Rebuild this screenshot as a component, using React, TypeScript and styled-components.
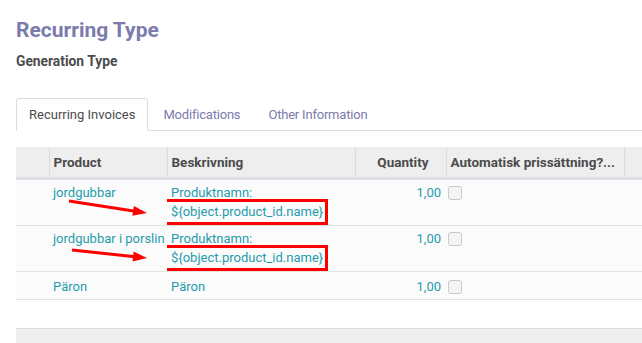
import React from "react";
import styled, { createGlobalStyle } from "styled-components";

type LineType = {
  product: string;
  label: string;
  template?: string;
  quantity: string;
};

const lines: LineType[] = [
  { product: "jordgubbar", label: "Produktnamn:", template: "${object.product_id.name}", quantity: "1,00" },
  { product: "jordgubbar i porslin", label: "Produktnamn:", template: "${object.product_id.name}", quantity: "1,00" },
  { product: "Päron", label: "Päron", quantity: "1,00" },
];

const tabs = ["Recurring Invoices", "Modifications", "Other Information"];

const GlobalStyle = createGlobalStyle`
  body {
    margin: 0;
    background: #ffffff;
    font-family: Roboto, "Noto Sans", sans-serif;
    font-size: 13px;
    color: #4c4c4c;
    overflow: hidden;
  }
`;

export default function App() {
  return (
    <>
      <GlobalStyle />
      <Sheet>
        <Title>Recurring Type</Title>
        <FieldLabel>Generation Type</FieldLabel>
        <TabBar>
          {tabs.map((t, i) => (
            <Tab key={t} active={i === 0}>
              {t}
            </Tab>
          ))}
        </TabBar>
        <TableWrap>
          <Table>
            <colgroup>
              <col style={{ width: 33 }} />
              <col style={{ width: 118 }} />
              <col style={{ width: 188 }} />
              <col style={{ width: 91 }} />
              <col style={{ width: 178 }} />
              <col />
            </colgroup>
            <thead>
              <tr>
                <Th />
                <Th>Product</Th>
                <Th>Beskrivning</Th>
                <Th numeric>Quantity</Th>
                <Th>Automatisk prissättning?...</Th>
                <Th />
              </tr>
            </thead>
            <tbody>
              {lines.map((l, i) => (
                <Row key={i} single={!l.template}>
                  <Td />
                  <Td>{l.product}</Td>
                  <Td>
                    {l.label}
                    {l.template && (
                      <>
                        <br />
                        <Marked>{l.template}</Marked>
                      </>
                    )}
                  </Td>
                  <Td numeric>{l.quantity}</Td>
                  <Td>
                    <Check />
                  </Td>
                  <Td />
                </Row>
              ))}
            </tbody>
          </Table>
          <Arrows width="200" height="120" viewBox="0 0 200 120">
            <Arrow x1={53} y1={21} x2={131} y2={33} />
            <Arrow x1={56} y1={70} x2={131} y2={78} />
          </Arrows>
          <Footer />
        </TableWrap>
      </Sheet>
    </>
  );
}

// red annotation arrow, head drawn as a triangle at (x2, y2)
function Arrow({ x1, y1, x2, y2 }: { x1: number; y1: number; x2: number; y2: number }) {
  const a = Math.atan2(y2 - y1, x2 - x1);
  const len = 14;
  const half = 5;
  const bx = x2 - len * Math.cos(a);
  const by = y2 - len * Math.sin(a);
  const px = -Math.sin(a) * half;
  const py = Math.cos(a) * half;
  return (
    <g>
      <line x1={x1} y1={y1} x2={bx + 2 * Math.cos(a)} y2={by + 2 * Math.sin(a)} stroke="#ff0000" strokeWidth="3" />
      <polygon points={`${x2},${y2} ${bx + px},${by + py} ${bx - px},${by - py}`} fill="#ff0000" />
    </g>
  );
}

const Sheet = styled.div`
  padding-left: 16px;
  width: 626px;
`;

const Title = styled.div`
  margin-top: 17px;
  font-size: 21px;
  line-height: 26px;
  font-weight: 700;
  color: #7c7bad;
`;

const FieldLabel = styled.div`
  margin-top: 10px;
  font-size: 13.8px;
  line-height: 16px;
  font-weight: 700;
  color: #4c4c4c;
`;

const TabBar = styled.div`
  margin-top: 29px;
  display: flex;
  border-bottom: 1px solid #dddddd;
  height: 32px;
`;

const Tab = styled.div<{ active?: boolean }>`
  display: flex;
  align-items: center;
  padding: 0 12px 1px;
  margin-right: 2px;
  margin-bottom: -1px;
  font-size: 13px;
  letter-spacing: ${(p) => (p.active ? "0" : "-0.2px")};
  border: 1px solid ${(p) => (p.active ? "#dddddd" : "transparent")};
  border-bottom-color: ${(p) => (p.active ? "#ffffff" : "transparent")};
  border-radius: 3px 3px 0 0;
  background: ${(p) => (p.active ? "#ffffff" : "transparent")};
  color: ${(p) => (p.active ? "#4c4c4c" : "#7c7bad")};
`;

const TableWrap = styled.div`
  position: relative;
  margin-top: 16px;
`;

const Table = styled.table`
  width: 100%;
  table-layout: fixed;
  border-collapse: collapse;
`;

const Th = styled.th<{ numeric?: boolean }>`
  height: 30px;
  padding: 0 ${(p) => (p.numeric ? "17px" : "4px")} 0 4px;
  background: #eeeeee;
  border-left: 1px solid #dcdcdc;
  border-bottom: 3px solid #dde1e6;
  text-align: ${(p) => (p.numeric ? "right" : "left")};
  font-size: 13.5px;
  font-weight: 700;
  color: #4c4c4c;
  white-space: nowrap;
  overflow: hidden;
  text-overflow: ellipsis;
  &:first-child {
    border-left: none;
  }
`;

const Row = styled.tr<{ single?: boolean }>`
  background: #fbfbfb;
  border-bottom: 1px solid #e2e2e2;

  > td {
    padding-top: ${(p) => (p.single ? "5px" : "3px")};
    padding-bottom: ${(p) => (p.single ? "3px" : "4px")};
  }
`;

const Td = styled.td<{ numeric?: boolean }>`
  padding-left: 4px;
  padding-right: ${(p) => (p.numeric ? "5px" : "4px")};
  vertical-align: top;
  line-height: 19px;
  color: #1f9cad;
  text-align: ${(p) => (p.numeric ? "right" : "left")};
  white-space: nowrap;
  overflow: hidden;
`;

const Marked = styled.span`
  position: relative;
  display: inline-block;
  &::after {
    content: "";
    position: absolute;
    left: -8px;
    right: -5px;
    top: -3px;
    bottom: -4px;
    border: 3px solid #ff0000;
  }
`;

const Check = styled.span`
  display: inline-block;
  vertical-align: top;
  margin: 3px 0 0 -2px;
  width: 12px;
  height: 12px;
  border: 1px solid #c9c9c9;
  border-radius: 3px;
  background: #f4f4f4;
`;

const Arrows = styled.svg`
  position: absolute;
  left: 0;
  top: 33px;
  pointer-events: none;
`;

const Footer = styled.div`
  margin-top: 28px;
  height: 20px;
  background: #eeeeee;
  border-top: 1px solid #dddddd;
`;
